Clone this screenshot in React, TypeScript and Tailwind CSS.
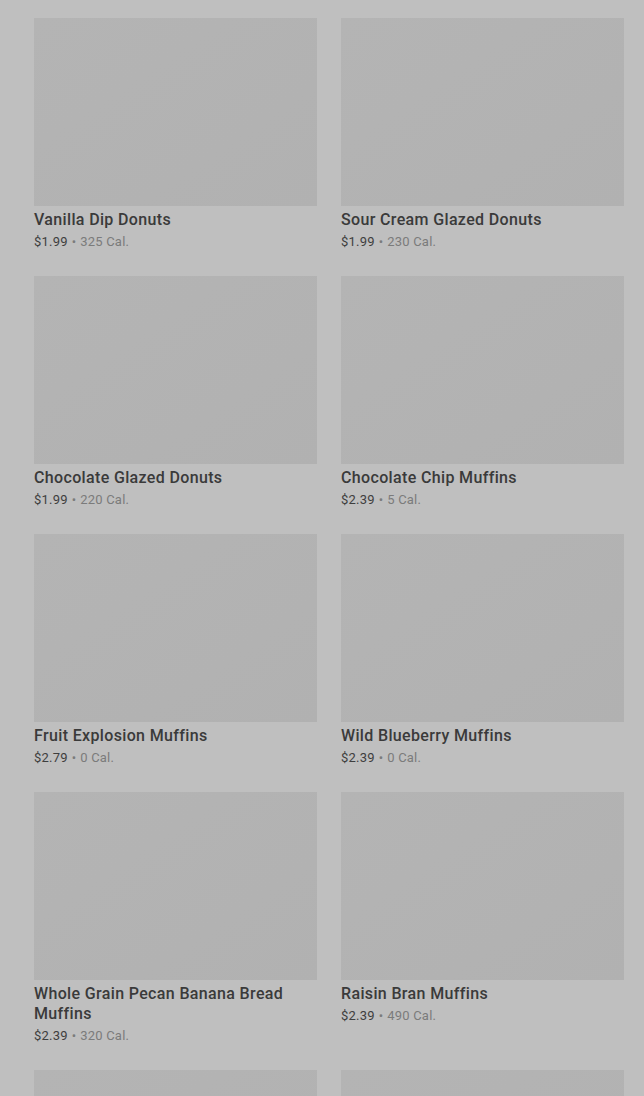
const items = [
  { name: "Vanilla Dip Donuts", price: "$1.99", cal: "325 Cal." },
  { name: "Sour Cream Glazed Donuts", price: "$1.99", cal: "230 Cal." },
  { name: "Chocolate Glazed Donuts", price: "$1.99", cal: "220 Cal." },
  { name: "Chocolate Chip Muffins", price: "$2.39", cal: "5 Cal." },
  { name: "Fruit Explosion Muffins", price: "$2.79", cal: "0 Cal." },
  { name: "Wild Blueberry Muffins", price: "$2.39", cal: "0 Cal." },
  { name: "Whole Grain Pecan Banana Bread Muffins", price: "$2.39", cal: "320 Cal." },
  { name: "Raisin Bran Muffins", price: "$2.39", cal: "490 Cal." },
  { name: "Blueberry Crumb Muffins", price: "$2.39", cal: "410 Cal." },
  { name: "Banana Nut Muffins", price: "$2.39", cal: "430 Cal." },
];

function ItemCard({ name, price, cal }: { name: string; price: string; cal: string }) {
  return (
    <article className="flex flex-col">
      <div className="h-[188px] w-full bg-gradient-to-br from-[#b4b4b4] to-[#b1b1b1]" />
      <h3 className="mt-[4px] text-[16px] font-medium leading-[20px] tracking-[0.35px] text-[#3a3a3a]">
        {name}
      </h3>
      <p className="mt-[2px] text-[13px] leading-[20px] tracking-[0.2px] text-[#7b7b7b]">
        <span className="text-[#3e3e3e]">{price}</span>
        <span className="mx-[4px]">•</span>
        {cal}
      </p>
    </article>
  );
}

export default function App() {
  return (
    <div className="min-h-screen bg-[#bfbfbf] pt-[18px] pl-[34px] pr-[20px] font-['Roboto','Liberation_Sans',sans-serif]">
      <div className="grid grid-cols-2 gap-x-[24px] gap-y-[24px]">
        {items.map((it) => (
          <ItemCard key={it.name} {...it} />
        ))}
      </div>
    </div>
  );
}
